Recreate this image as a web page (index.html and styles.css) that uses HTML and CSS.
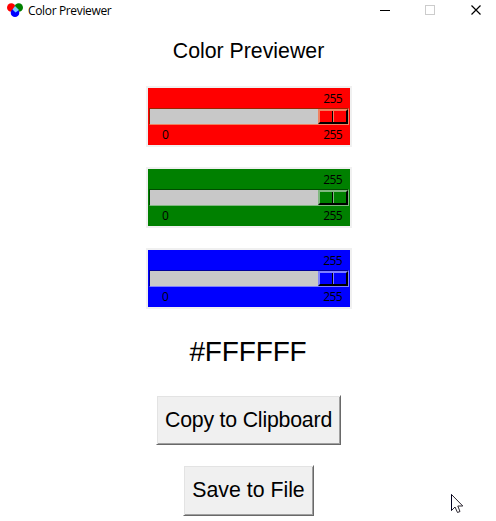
FILE: index.html
```html
<!DOCTYPE html>
<html lang="en">
<head>
<meta charset="utf-8">
<title>Color Previewer</title>
<link rel="stylesheet" href="styles.css">
</head>
<body>
<header class="titlebar">
  <svg class="logo" width="16" height="16" viewBox="0 0 16 16">
    <circle cx="4.3" cy="5.5" r="4.3" fill="#f00"/>
    <circle cx="11.7" cy="5.5" r="4.3" fill="#008000"/>
    <circle cx="8" cy="10.8" r="4.3" fill="#00f"/>
    <path d="M8 4L12 8L8.500 10.500L5.500 7.500Z" fill="#7cf"/>
  </svg>
  <span class="caption">Color Previewer</span>
  <svg class="controls" width="124" height="20" viewBox="0 0 124 20" shape-rendering="crispEdges">
    <path d="M8 10.5h10" stroke="#000"/>
    <rect x="53.5" y="5.5" width="9" height="9" fill="none" stroke="#ccc"/>
    <path d="M99.500 5.500l9 9M108.500 5.500l-9 9" stroke="#000" stroke-width="1.2" shape-rendering="auto"/>
  </svg>
</header>
<main class="content">
  <h1 class="heading">Color Previewer</h1>
  <div class="scale red">
    <div class="value">255</div>
    <div class="trough"><div class="thumb"></div></div>
    <div class="ticks"><span>0</span><span>255</span></div>
  </div>
  <div class="scale green">
    <div class="value">255</div>
    <div class="trough"><div class="thumb"></div></div>
    <div class="ticks"><span>0</span><span>255</span></div>
  </div>
  <div class="scale blue">
    <div class="value">255</div>
    <div class="trough"><div class="thumb"></div></div>
    <div class="ticks"><span>0</span><span>255</span></div>
  </div>
  <div class="hex">#FFFFFF</div>
  <button class="button copy">Copy to Clipboard</button>
  <button class="button save">Save to File</button>
</main>
<svg class="cursor" width="13" height="20" viewBox="0 0 13 20">
  <path d="M.5.5V16.500L4 13L6.500 18.500L9 17.500L6.800 12H11.800Z" fill="#fff" stroke="#2b2630"/>
  <path d="M.5.5V16.500" stroke="#000020"/>
</svg>
</body>
</html>
```
FILE: styles.css
```css
*, *::before { box-sizing: border-box; }
body {
  margin: 0;
  height: 521px;
  overflow: hidden;
  background: #fff;
  color: #000;
  font-family: "Liberation Sans", Arial, sans-serif;
}
.titlebar {
  display: flex;
  align-items: center;
  height: 20px;
  padding-left: 7px;
}
.caption {
  margin: 1px 0 0 5px;
  font: 12px/20px "Open Sans", sans-serif;
  letter-spacing: -0.35px;
}
.controls { margin-left: auto; }
.content {
  display: flex;
  flex-direction: column;
  align-items: center;
  width: 498px;
}
.heading {
  margin: 16px 1px 20px 0;
  font-size: 21.3px;
  font-weight: 400;
  line-height: 30px;
}
.scale {
  width: 206px;
  height: 61px;
  margin-bottom: 20px;
  border: 2px solid #f0f0f0;
  padding: 0 1px;
  font: 12px/20px "Open Sans", sans-serif;
  letter-spacing: -0.6px;
}
.red { background: #f00; --dark: #992600; --light: #f08060; }
.green { background: #008000; --dark: #004c00; --light: #80b880; }
.blue { background: #00f; --dark: #000099; --light: #7f80ff; }
.value { height: 20px; padding-right: 7px; text-align: right; line-height: 22px; }
.trough {
  display: flex;
  justify-content: flex-end;
  height: 17px;
  border: 1px solid;
  border-color: var(--dark) var(--light) var(--light) var(--dark);
  background: #c8c8c8;
}
.thumb {
  display: flex;
  width: 30px;
  height: 15px;
  border: 2px solid;
  border-color: var(--light) #000 #000 var(--light);
}
.red .thumb { background: #f00; }
.green .thumb { background: #008000; }
.blue .thumb { background: #00f; }
.thumb::before {
  content: "";
  width: 2px;
  height: 11px;
  margin-left: 12px;
  border-left: 1px solid #000;
  border-right: 1px solid var(--light);
}
.ticks {
  display: flex;
  justify-content: space-between;
  padding: 0 7px 0 13px;
  line-height: 19px;
}
.hex {
  height: 32px;
  margin: 7px 2px 0 0;
  font-size: 28px;
  line-height: 32px;
  letter-spacing: -0.15px;
}
.button {
  margin-right: 1px;
  padding: 0;
  border: 1px solid;
  border-color: #fff #696969 #696969 #fff;
  background: #f0f0f0;
  box-shadow: inset 1px 1px #e3e3e3, inset -1px -1px #a0a0a0;
  font: 21.3px/48px "Liberation Sans", Arial, sans-serif;
  letter-spacing: -0.2px;
  color: #000;
}
.copy { width: 185px; height: 50px; margin-top: 27px; }
.save { width: 131px; height: 51px; margin-top: 20px; padding-bottom: 1px; letter-spacing: 0; }
.cursor { position: absolute; left: 451px; top: 494px; }
```
